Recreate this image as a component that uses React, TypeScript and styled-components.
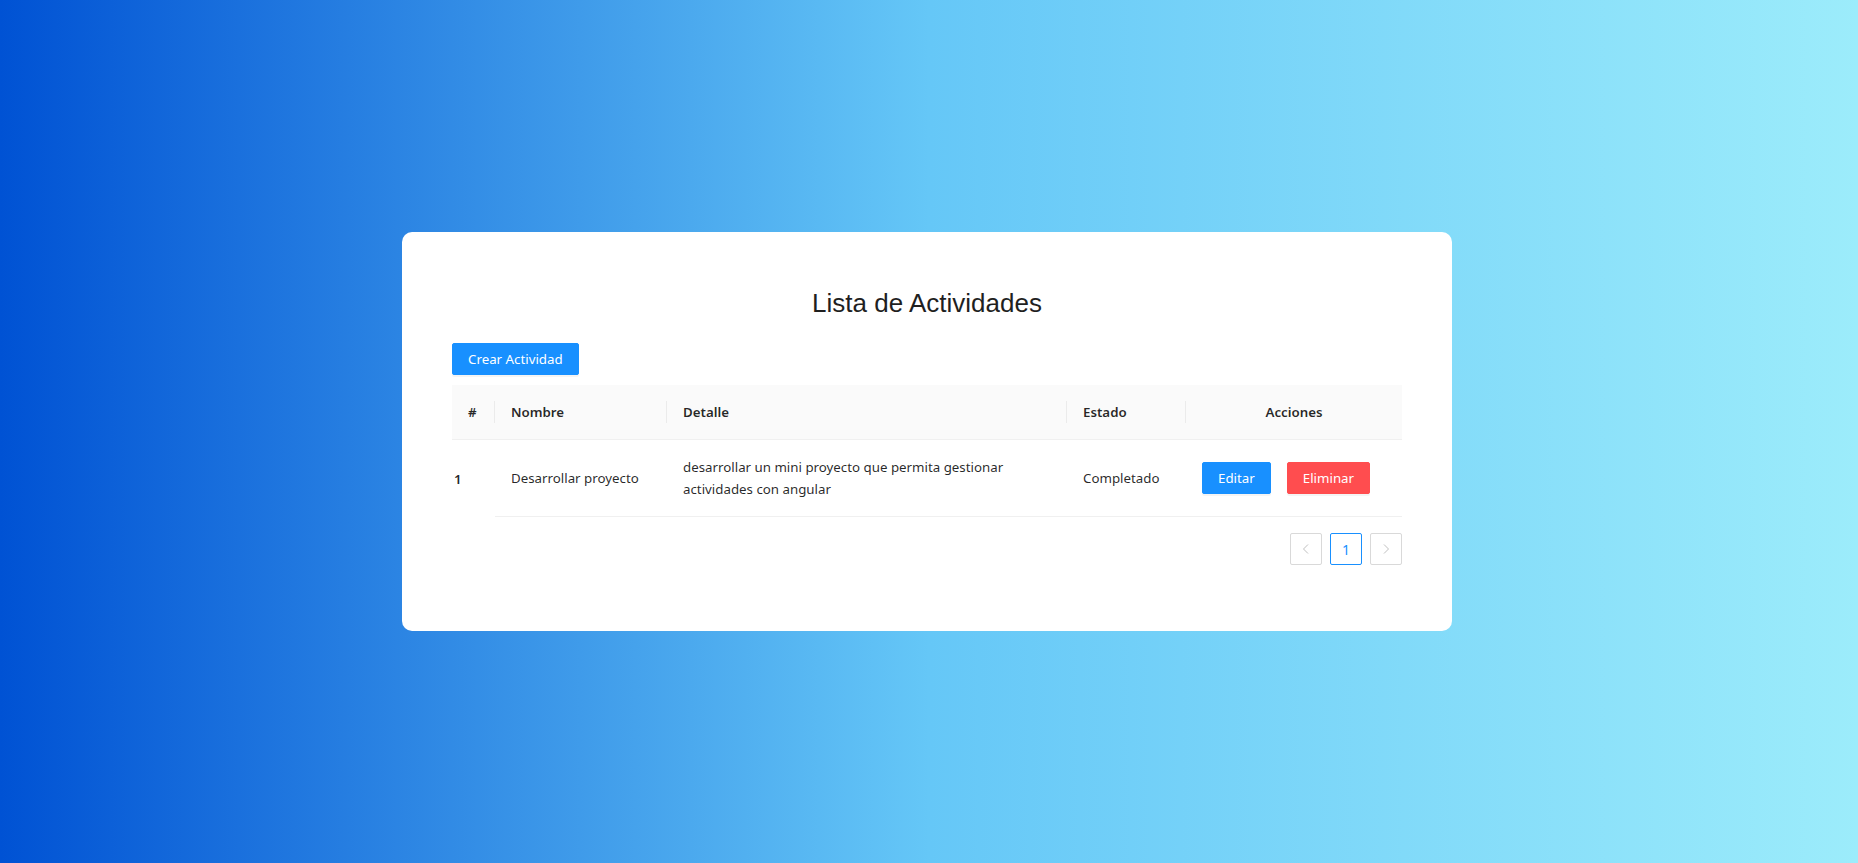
import React from "react";
import styled, { createGlobalStyle } from "styled-components";

const GlobalStyle = createGlobalStyle`
  html, body { margin: 0; padding: 0; }
  body {
    font-family: "Noto Sans", "Open Sans", sans-serif;
    font-size: 13.3px;
    color: rgba(0, 0, 0, 0.85);
  }
  * { box-sizing: border-box; }
`;

const Page = styled.div`
  width: 100%;
  height: 863px;
  background: linear-gradient(to right, #0052d4, #65c7f7, #9cecfb);
  display: flex;
  align-items: center;
  justify-content: center;
`;

const Card = styled.div`
  width: 1050px;
  background: #ffffff;
  border-radius: 10px;
  padding: 50px;
  margin-right: 4px;
`;

const Title = styled.h2`
  margin: 5px 0 24px;
  font-family: "Liberation Sans", Arial, sans-serif;
  font-weight: 400;
  font-size: 26px;
  line-height: 32px;
  text-align: center;
  color: #1f1f1f;
`;

const Button = styled.button<{ $variant?: "primary" | "danger" }>`
  height: 32px;
  padding: 4px 15px;
  border: 1px solid ${(p) => (p.$variant === "danger" ? "#ff4d4f" : "#1890ff")};
  background: ${(p) => (p.$variant === "danger" ? "#ff4d4f" : "#1890ff")};
  color: #ffffff;
  font-family: inherit;
  font-size: 13.3px;
  line-height: 22px;
  border-radius: 2px;
  box-shadow: 0 2px 0 rgba(0, 0, 0, 0.045);
  cursor: pointer;
  white-space: nowrap;
`;

const Toolbar = styled.div`
  display: flex;
  margin-bottom: 10px;
`;

const Table = styled.table`
  width: 100%;
  table-layout: fixed;
  border-collapse: separate;
  border-spacing: 0;
  font-size: 13.3px;
`;

const HeadCell = styled.th<{ $align?: "left" | "center"; $sep?: boolean }>`
  position: relative;
  padding: 16px;
  background: #fafafa;
  border-bottom: 1px solid #f0f0f0;
  font-weight: 600;
  line-height: 22px;
  text-align: ${(p) => p.$align ?? "left"};
  color: rgba(0, 0, 0, 0.85);
  &::before {
    content: "";
    display: ${(p) => (p.$sep ? "block" : "none")};
    position: absolute;
    right: 0;
    top: 50%;
    width: 1px;
    height: 22px;
    transform: translateY(-50%);
    background: rgba(0, 0, 0, 0.06);
  }
`;

const RowHead = styled.th`
  padding: 16px 2px;
  text-align: left;
  font-weight: 600;
  line-height: 22px;
  vertical-align: middle;
`;

const Cell = styled.td`
  padding: 16px;
  border-bottom: 1px solid #f0f0f0;
  line-height: 22px;
  vertical-align: middle;
  overflow-wrap: break-word;
`;

const Actions = styled.div`
  display: flex;
  gap: 16px;
`;

const Pager = styled.ul`
  list-style: none;
  margin: 16px 0;
  padding: 0;
  display: flex;
  justify-content: flex-end;
  gap: 8px;
`;

const PageItem = styled.li<{ $active?: boolean; $disabled?: boolean }>`
  width: 32px;
  height: 32px;
  display: flex;
  align-items: center;
  justify-content: center;
  border: 1px solid ${(p) => (p.$active ? "#1890ff" : "#d9d9d9")};
  border-radius: 2px;
  color: ${(p) => (p.$active ? "#1890ff" : p.$disabled ? "rgba(0,0,0,0.25)" : "rgba(0,0,0,0.85)")};
  font-size: 14px;
  background: #fff;
`;

const Chevron = ({ dir }: { dir: "left" | "right" }) => (
  <svg width="12" height="12" viewBox="0 0 12 12" fill="none">
    <path
      d={dir === "left" ? "M8 1.5 L3.5 6 L8 10.5" : "M4 1.5 L8.5 6 L4 10.5"}
      stroke="currentColor"
      strokeWidth="1"
    />
  </svg>
);

const activities = [
  {
    id: 1,
    nombre: "Desarrollar proyecto",
    detalle: "desarrollar un mini proyecto que permita gestionar actividades con angular",
    estado: "Completado",
  },
];

export default function App() {
  return (
    <>
      <GlobalStyle />
      <Page>
        <Card>
          <Title>Lista de Actividades</Title>
          <Toolbar>
            <Button>Crear Actividad</Button>
          </Toolbar>
          <Table>
            <colgroup>
              <col style={{ width: 43 }} />
              <col style={{ width: 172 }} />
              <col style={{ width: 400 }} />
              <col style={{ width: 119 }} />
              <col />
            </colgroup>
            <thead>
              <tr>
                <HeadCell $sep>#</HeadCell>
                <HeadCell $sep>Nombre</HeadCell>
                <HeadCell $sep>Detalle</HeadCell>
                <HeadCell $sep>Estado</HeadCell>
                <HeadCell $align="center">Acciones</HeadCell>
              </tr>
            </thead>
            <tbody>
              {activities.map((a) => (
                <tr key={a.id}>
                  <RowHead scope="row">{a.id}</RowHead>
                  <Cell>{a.nombre}</Cell>
                  <Cell>{a.detalle}</Cell>
                  <Cell>{a.estado}</Cell>
                  <Cell>
                    <Actions>
                      <Button>Editar</Button>
                      <Button $variant="danger">Eliminar</Button>
                    </Actions>
                  </Cell>
                </tr>
              ))}
            </tbody>
          </Table>
          <Pager>
            <PageItem $disabled>
              <Chevron dir="left" />
            </PageItem>
            <PageItem $active>1</PageItem>
            <PageItem $disabled>
              <Chevron dir="right" />
            </PageItem>
          </Pager>
        </Card>
      </Page>
    </>
  );
}
